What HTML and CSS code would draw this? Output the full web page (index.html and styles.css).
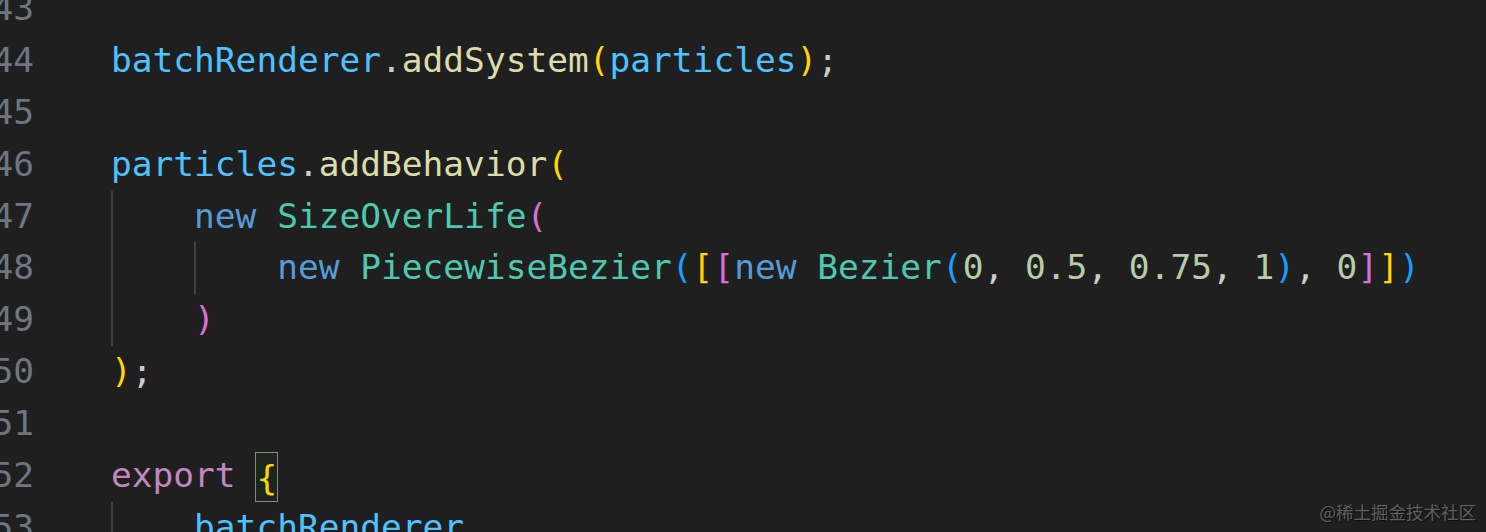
FILE: index.html
```html
<!DOCTYPE html>
<html>
<head>
<meta charset="utf-8">
<link rel="stylesheet" href="styles.css">
</head>
<body>
<div class="editor">
  <div class="gutter">
    <div class="ln">43</div>
    <div class="ln">44</div>
    <div class="ln">45</div>
    <div class="ln">46</div>
    <div class="ln">47</div>
    <div class="ln">48</div>
    <div class="ln">49</div>
    <div class="ln">50</div>
    <div class="ln">51</div>
    <div class="ln">52</div>
    <div class="ln">53</div>
  </div>
  <div class="code">
    <div class="line"></div>
    <div class="line"><span class="t"><span class="v">batchRenderer</span>.<span class="f">addSystem</span><span class="b1">(</span><span class="v">particles</span><span class="b1">)</span>;</span></div>
    <div class="line"></div>
    <div class="line"><span class="t"><span class="v">particles</span>.<span class="f">addBehavior</span><span class="b1">(</span></span></div>
    <div class="line"><span class="ind"></span><span class="t"><span class="k">new</span> <span class="c">SizeOverLife</span><span class="b2">(</span></span></div>
    <div class="line"><span class="ind"></span><span class="ind"></span><span class="t"><span class="k">new</span> <span class="c">PiecewiseBezier</span><span class="b3">(</span><span class="b1">[</span><span class="b2">[</span><span class="k">new</span> <span class="c">Bezier</span><span class="b3">(</span><span class="n">0</span>, <span class="n">0.5</span>, <span class="n">0.75</span>, <span class="n">1</span><span class="b3">)</span>, <span class="n">0</span><span class="b2">]</span><span class="b1">]</span><span class="b3">)</span></span></div>
    <div class="line"><span class="ind"></span><span class="t"><span class="b2">)</span></span></div>
    <div class="line"><span class="t"><span class="b1">)</span>;</span></div>
    <div class="line"></div>
    <div class="line"><span class="t"><span class="x">export</span> <span class="b1 match">{</span></span></div>
    <div class="line"><span class="ind"></span><span class="t"><span class="v">batchRenderer</span></span></div>
  </div>
</div>
<div class="watermark">@稀土掘金技术社区</div>
</body>
</html>
```
FILE: styles.css
```css
html, body {
  margin: 0;
  padding: 0;
  background: #1f1f1f;
  overflow: hidden;
  height: 532px;
}

.editor {
  display: flex;
  margin-top: -17px;
  font-family: "DejaVu Sans Mono", "Liberation Mono", monospace;
  font-size: 34.5px;
  color: #cccccc;
}

.gutter {
  width: 50px;
  margin-left: -16px;
  flex: none;
}

.ln {
  height: 51.9px;
  line-height: 51.9px;
  text-align: right;
  color: #6e7681;
}

.code {
  padding-left: 77px;
  flex: 1;
}

.line {
  display: flex;
  align-items: center;
  height: 51.9px;
}

.t {
  white-space: pre;
  line-height: 51.9px;
}

.ind {
  align-self: stretch;
  width: 4ch;
  flex: none;
  box-sizing: border-box;
  border-left: 2px solid #404040;
}

.v { color: #4fc1ff; }
.f { color: #dcdcaa; }
.k { color: #569cd6; }
.c { color: #4ec9b0; }
.n { color: #b5cea8; }
.x { color: #c586c0; }
.b1 { color: #ffd700; }
.b2 { color: #da70d6; }
.b3 { color: #179fff; }

.match {
  display: inline-block;
  height: 50px;
  line-height: 50px;
  vertical-align: middle;
  box-sizing: border-box;
  border: 1px solid #888888;
  background: rgba(0, 100, 0, 0.1);
  margin-left: -1px;
  margin-right: -1px;
}

.watermark {
  position: absolute;
  right: 10px;
  bottom: 8px;
  font-family: "Noto Sans CJK SC", sans-serif;
  font-size: 17.5px;
  color: rgba(255, 255, 255, 0.32);
  text-shadow: 1px 1px 1px rgba(0, 0, 0, 0.6);
}
```
